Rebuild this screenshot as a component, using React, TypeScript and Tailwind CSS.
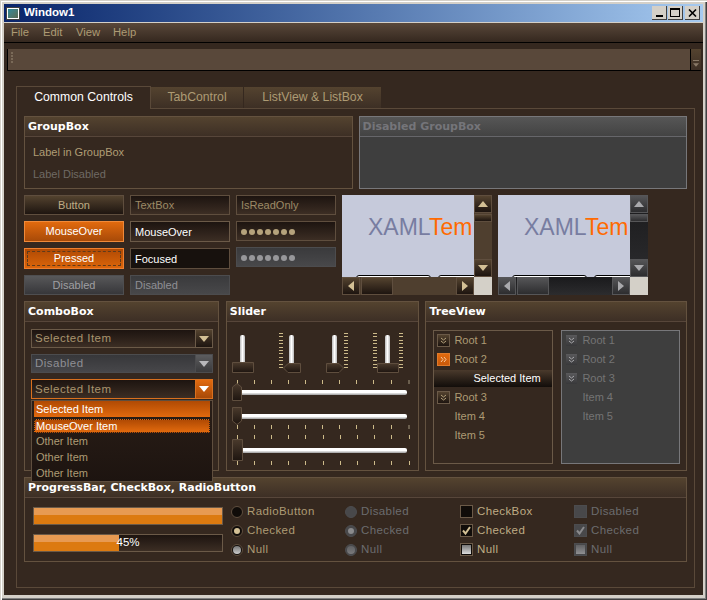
import React from "react";

const Tri = ({ dir, color, size = 5 }: { dir: "u" | "d" | "l" | "r"; color: string; size?: number }) => {
  const pts = { u: "0,8 5,2 10,8", d: "0,2 5,8 10,2", l: "8,0 2,5 8,10", r: "2,0 8,5 2,10" }[dir];
  return (
    <svg width={size * 2} height={size * 2} viewBox="0 0 10 10" className="block">
      <polygon points={pts} fill={color} />
    </svg>
  );
};

const GroupBox = ({ title, className = "", children, disabled = false }: { title: string; className?: string; children?: React.ReactNode; disabled?: boolean }) => (
  <div className={`flex flex-col border ${disabled ? "border-[#77777a] bg-[#3e3e3e]" : "border-[#64523f] bg-[#35281f]"} ${className}`}>
    <div className={`h-[20px] shrink-0 border-b px-[3px] pt-[2px] flex items-center font-['DejaVu_Sans',sans-serif] font-bold text-[11px] ${disabled ? "border-[#66666a] bg-linear-to-b from-[#565656] to-[#434343] text-[#75757a]" : "border-[#57463a] bg-linear-to-b from-[#54432f] to-[#3d2f25] text-white"}`}>
      {title}
    </div>
    {children}
  </div>
);

const Btn = ({ kind, children }: { kind: "n" | "o" | "p" | "d"; children: React.ReactNode }) => {
  const cls = {
    n: "h-[20px] border-[#5f4e3e] bg-linear-to-b from-[#54432f] to-[#1e1510] text-[#bfac85]",
    o: "h-[21px] border-[#f08a3a] bg-linear-to-b from-[#e26a0e] to-[#a84a08] text-white",
    p: "h-[21px] border-[#ee8030] bg-linear-to-b from-[#b04a04] to-[#dc650a] text-white",
    d: "h-[20px] border-[#4e4e50] bg-linear-to-b from-[#58585a] to-[#37373a] text-[#9f9fa2]",
  }[kind];
  return (
    <div className={`relative w-full border flex items-center justify-center text-[11px] ${cls}`}>
      {kind === "p" && <div className="absolute inset-[2px] border border-dashed border-[#5e3a1c]" />}
      <span className="relative">{children}</span>
    </div>
  );
};

const Input = ({ cls, children }: { cls: string; children?: React.ReactNode }) => (
  <div className={`w-full border flex items-center px-[4px] pt-[1px] text-[11px] ${cls}`}>{children}</div>
);

const Dots = ({ color }: { color: string }) => (
  <div className="flex gap-[2px]">
    {[0, 1, 2, 3, 4, 5, 6].map((i) => (
      <span key={i} className="w-[6px] h-[6px] rounded-full" style={{ backgroundColor: color }} />
    ))}
  </div>
);

const SB = ({ dark }: { dark?: boolean }) => {
  const btn = dark
    ? "border-[#565658] bg-linear-to-b from-[#555557] to-[#2d2d2f]"
    : "border-[#5f4e3e] bg-linear-to-b from-[#54432f] to-[#1e1510]";
  const arrow = dark ? "#a9a9ac" : "#d3c095";
  const track = dark ? "bg-linear-to-b from-[#1a1a1c] to-[#2c2c2e]" : "bg-[#4f3f2f]";
  return (
    <div className="w-[150px] h-[100px] flex flex-col">
      <div className="flex h-[82px]">
        <div className="w-[132px] bg-[#c6cadb] overflow-hidden relative">
          <div className="pl-[26px] pt-[17px] text-[23px] leading-[30px] whitespace-nowrap">
            <span className="text-[#787da1]">XAML</span>
            <span className="text-[#ff6a00]">Tem</span>
          </div>
          <div className="absolute left-[14px] top-[80px] w-[75px] h-[6px] bg-white border border-black rounded-t-[3px]" />
          <div className="absolute left-[96px] top-[80px] w-[60px] h-[6px] bg-white border border-black rounded-t-[3px]" />
        </div>
        <div className={`w-[18px] flex flex-col ${track}`}>
          <div className={`h-[18px] border flex items-center justify-center ${btn}`}><Tri dir="u" color={arrow} /></div>
          <div className="h-[1px]" />
          <div className={`h-[8px] border ${btn}`} />
          <div className="flex-1" />
          <div className={`h-[18px] border flex items-center justify-center ${btn}`}><Tri dir="d" color={arrow} /></div>
        </div>
      </div>
      <div className="flex h-[18px]">
        <div className={`w-[132px] flex ${track}`}>
          <div className={`w-[18px] border flex items-center justify-center ${btn}`}><Tri dir="l" color={arrow} /></div>
          <div className="w-[1px]" />
          <div className={`w-[32px] border ${btn}`} />
          <div className="flex-1" />
          <div className={`w-[18px] border flex items-center justify-center ${btn}`}><Tri dir="r" color={arrow} /></div>
        </div>
        <div className="w-[18px] bg-[#d4d0c8]" />
      </div>
    </div>
  );
};

const Combo = ({ kind, children }: { kind: "n" | "d" | "o"; children: React.ReactNode }) => {
  const box = {
    n: "h-[19px] border-[#6b5a48] bg-linear-to-b from-[#1d1410] to-[#3c2e24] text-[#a8946e]",
    d: "h-[19px] border-[#4c4c4e] bg-linear-to-b from-[#37373a] to-[#47474a] text-[#8f8f94]",
    o: "h-[20px] border-[#d9701e] bg-linear-to-b from-[#1d1410] to-[#3c2e24] text-[#a8946e]",
  }[kind];
  const b = {
    n: "bg-linear-to-b from-[#54432f] to-[#1e1510] border-[#6b5a48]",
    d: "bg-linear-to-b from-[#5c5c5e] to-[#3a3a3c] border-[#4c4c4e]",
    o: "bg-linear-to-b from-[#e26a0e] to-[#a84a08] border-[#d9701e]",
  }[kind];
  const a = { n: "#d3c095", d: "#b8b8bb", o: "#ffffff" }[kind];
  return (
    <div className={`relative border flex items-center text-[11.5px] tracking-[0.48px] ${box}`}>
      <span className="flex-1 pl-[3px] pt-[1px]">{children}</span>
      <div className={`w-[17px] h-full border-l flex items-center justify-center ${b}`}><Tri dir="d" color={a} /></div>
    </div>
  );
};

const Ticks = ({ last, v }: { last?: boolean; v?: boolean }) =>
  v ? (
    <div className="flex flex-col justify-between h-[35px] w-[4px]">
      {Array.from({ length: 11 }).map((_, i) => (
        <span key={i} className="h-[1px] w-[4px] bg-[#cdbb8a]" />
      ))}
    </div>
  ) : (
    <div className="flex justify-between h-[4px] ml-[5px] w-[173px]">
      {Array.from({ length: 11 }).map((_, i) => (
        <span key={i} className={i === 10 && last ? "w-[2px] h-[4px] bg-[#6b5f4e]" : "w-[1px] h-[4px] bg-[#cdbb8a]"} />
      ))}
    </div>
  );

const VTrack = () => <div className="w-[5px] h-[28px] rounded-t-[2px] bg-linear-to-r from-[#b9b9b9] via-white to-[#b9b9b9]" />;
const HTrack = () => <div className="h-[5px] flex-1 rounded-r-[2px] bg-linear-to-b from-white via-white to-[#9c9c9c]" />;

const Thumb = ({ w, h, clip, cls = "" }: { w: number; h: number; clip?: string; cls?: string }) => {
  const id = `th${w}x${h}${(clip ?? "").replace(/[^0-9]/g, "")}`;
  return (
    <svg width={w} height={h} viewBox={`0 0 ${w} ${h}`} className={`block shrink-0 ${cls}`}>
      <defs>
        <linearGradient id={id} x1="0" y1="0" x2="0" y2="1">
          <stop offset="0" stopColor="#4a3a2c" />
          <stop offset="1" stopColor="#1e1510" />
        </linearGradient>
      </defs>
      <polygon points={clip ?? `0.5,0.5 ${w - 0.5},0.5 ${w - 0.5},${h - 0.5} 0.5,${h - 0.5}`} fill={`url(#${id})`} stroke="#5f4e3e" />
    </svg>
  );
};

const Exp = ({ kind }: { kind: "n" | "o" | "d" }) => {
  const cls = {
    n: "w-[13px] h-[13px] border border-[#6b5a48] bg-linear-to-b from-[#54432f] to-[#1e1510]",
    o: "w-[13px] h-[13px] border border-[#e07a2a] bg-linear-to-b from-[#e26a0e] to-[#c9590a]",
    d: "w-[11px] h-[11px] bg-linear-to-b from-[#5a5a5c] to-[#38383a]",
  }[kind];
  const stroke = kind === "n" ? "#b5a27c" : kind === "o" ? "#f3c8a0" : "#a9a9ac";
  return (
    <div className={`shrink-0 flex items-center justify-center ${cls}`}>
      <svg width="7" height="7" viewBox="0 0 7 7" fill="none" stroke={stroke} strokeWidth="1">
        {kind === "o" ? <path d="M1 1l2 2.5-2 2.5M4 1l2 2.5-2 2.5" /> : <path d="M1 1l2.5 2 2.5-2M1 4l2.5 2 2.5-2" />}
      </svg>
    </div>
  );
};

const TreeRow = ({ k, children, d }: { k?: "n" | "o" | "d"; children: React.ReactNode; d?: boolean }) => (
  <div className={`h-[19px] flex items-center text-[11px] ${d ? "text-[#747474] pl-[4px] gap-[5px]" : "text-[#ad9b74] pl-[3px] gap-[4px]"}`}>
    {k ? <Exp kind={k} /> : <div className={d ? "w-[11px]" : "w-[13px]"} />}
    <span>{children}</span>
  </div>
);

const Radio = ({ state, d, children }: { state: "o" | "c" | "n"; d?: boolean; children: React.ReactNode }) => (
  <div className={`flex items-center gap-[4px] h-[19px] text-[11.5px] tracking-[0.4px] ${d ? "text-[#6c6c6e]" : "text-[#ad9b74]"}`}>
    <div className={`w-[12px] h-[12px] rounded-full flex items-center justify-center border ${d ? "border-[#4c4c4e] bg-[#48484a]" : "border-[#5f4e3e] bg-[#100c09]"}`}>
      {state === "c" && <div className={`w-[6px] h-[6px] rounded-full ${d ? "bg-[#8a8a8c]" : "bg-[#d3c095]"}`} />}
      {state === "n" && <div className={`w-[8px] h-[8px] rounded-full bg-linear-to-b ${d ? "from-[#606062] to-[#7a7a7c]" : "from-[#777] to-[#ccc]"}`} />}
    </div>
    <span>{children}</span>
  </div>
);

const Check = ({ state, d, children }: { state: "o" | "c" | "n"; d?: boolean; children: React.ReactNode }) => (
  <div className={`flex items-center gap-[4px] h-[19px] text-[11.5px] tracking-[0.4px] ${d ? "text-[#6c6c6e]" : "text-[#bfac85]"}`}>
    <div className={`w-[13px] h-[13px] flex items-center justify-center border ${d ? "border-[#4c4c4e] bg-[#48484a]" : "border-[#6b5a48] bg-[#100c09]"}`}>
      {state === "c" && (
        <svg width="9" height="9" viewBox="0 0 9 9" fill="none" stroke={d ? "#8a8a8c" : "#d3c095"} strokeWidth="2">
          <path d="M1 4.5l2.5 3L8 1" />
        </svg>
      )}
      {state === "n" && <div className={`w-[9px] h-[9px] bg-linear-to-b ${d ? "from-[#606062] to-[#909092]" : "from-[#777] to-[#ddd]"}`} />}
    </div>
    <span>{children}</span>
  </div>
);

const Progress = ({ pct, label }: { pct: number; label?: string }) => (
  <div className="relative h-[18px] w-[190px] border border-[#6b5a48] bg-linear-to-b from-[#1d1410] to-[#3c2e24]">
    <div className="h-full flex flex-col" style={{ width: `${pct}%` }}>
      <div className="h-[7px] bg-[#e79a52]" />
      <div className="flex-1 bg-[#dc7a10]" />
    </div>
    {label && <div className="absolute inset-0 flex items-center justify-center text-white text-[11.5px]">{label}</div>}
  </div>
);

export default function App() {
  return (
    <div className="w-[707px] h-[600px] bg-[#d4d0c8] p-[4px] pb-[5px] shadow-[inset_0_1px_0_#d4d0c8,inset_1px_0_0_#d4d0c8,inset_0_2px_0_#ffffff,inset_2px_0_0_#ffffff,inset_-1px_-1px_0_#404040,inset_-2px_-2px_0_#808080] font-['Liberation_Sans',sans-serif] overflow-hidden">
      <div className="h-full flex flex-col bg-[#35281f]">
        {/* Title */}
        <div className="h-[18px] shrink-0 bg-linear-to-r from-[#0a246a] to-[#a6caf0] flex items-center pl-[2px] pr-[3px]">
          <div className="w-[14px] h-[13px] bg-white border border-[#404040] p-[1px] mr-[4px]">
            <div className="w-full h-full bg-linear-to-br from-[#2a8a9a] to-[#5a6a50]" />
          </div>
          <span className="text-white font-bold text-[11.5px]">Window1</span>
          <div className="flex-1" />
          <div className="flex">
            <div className="w-[15px] h-[14px] bg-[#d4d0c8] border-r border-b border-[#404040] flex items-end justify-center pb-[2px]"><span className="w-[7px] h-[2px] bg-black" /></div>
            <div className="w-[15px] h-[14px] ml-[1px] bg-[#d4d0c8] border-r border-b border-[#404040] flex items-center justify-center"><span className="w-[10px] h-[9px] border border-black border-t-2" /></div>
            <div className="w-[15px] h-[14px] ml-[2px] bg-[#d4d0c8] border-r border-b border-[#404040] flex items-center justify-center">
              <svg width="9" height="8" viewBox="0 0 9 8" stroke="black" strokeWidth="1.6"><path d="M1 0.5l7 7M8 0.5l-7 7" /></svg>
            </div>
          </div>
        </div>
        <div className="h-[1px] shrink-0 bg-[#d4d0c8]" />
        {/* Menu */}
        <div className="h-[19px] shrink-0 bg-linear-to-b from-[#59483a] to-[#35281f] flex items-center pl-[7px] text-[11.25px] text-[#ad9b74]">
          <span className="w-[32px]">File</span>
          <span className="w-[33px]">Edit</span>
          <span className="w-[37px]">View</span>
          <span>Help</span>
        </div>
        <div className="h-[1px] shrink-0 bg-black" />
        {/* Toolbar */}
        <div className="pt-[6px] pl-[3px] pr-[2px] shrink-0">
          <div className="h-[22px] flex bg-[#59483a] border-l border-b border-black">
            <div className="w-[6px] flex flex-col gap-[1px] pl-[3px] pt-[3px]">
              {[0, 1, 2, 3].map((i) => <span key={i} className="w-[2px] h-[2px] bg-[#7a6a58]" />)}
            </div>
            <div className="flex-1" />
            <div className="w-[11px] border-l border-black bg-linear-to-b from-[#54432f] to-[#3d2f25] flex flex-col items-center justify-end pb-[2px] gap-[1px]">
              <span className="w-[6px] h-[1px] bg-[#8a7a68]" />
              <Tri dir="d" color="#8a7a68" size={3} />
            </div>
          </div>
        </div>
        {/* Tabs */}
        <div className="pt-[15px] pl-[12px] pr-[8px] flex flex-col">
          <div className="flex items-end h-[22px] text-[12.25px] text-[#ad9b74]">
            <div className="w-[135px] h-[23px] -mb-[1px] z-10 relative border border-b-0 border-[#5a4939] bg-[#35281f] text-white flex items-center justify-center pb-[2px]">Common Controls</div>
            <div className="w-[93px] h-[21px] border-r border-[#35281f] bg-linear-to-b from-[#54432f] to-[#3d2f25] flex items-center justify-center">TabControl</div>
            <div className="w-[137px] h-[21px] bg-linear-to-b from-[#54432f] to-[#3d2f25] flex items-center justify-center">ListView &amp; ListBox</div>
          </div>
          <div className="h-[480px] border border-[#5a4939] px-[7px] pt-[7px] flex flex-col gap-[6px]">
            {/* Row 1 */}
            <div className="flex gap-[6px] h-[73px] shrink-0">
              <GroupBox title="GroupBox" className="w-[329px]">
                <div className="px-[8px] pt-[9px] text-[11px] leading-[13px] text-[#b09d75]">Label in GroupBox</div>
                <div className="px-[8px] pt-[9px] text-[11px] leading-[13px] text-[#6f6a64]">Label Disabled</div>
              </GroupBox>
              <GroupBox title="Disabled GroupBox" className="w-[329px]" disabled />
            </div>
            {/* Row 2 */}
            <div className="flex gap-[6px] h-[100px] shrink-0">
              <div className="w-[100px] flex flex-col gap-[6px]">
                <Btn kind="n">Button</Btn>
                <Btn kind="o">MouseOver</Btn>
                <Btn kind="p">Pressed</Btn>
                <Btn kind="d">Disabled</Btn>
              </div>
              <div className="w-[100px] flex flex-col gap-[6px]">
                <Input cls="h-[20px] border-[#5f4e3e] bg-linear-to-b from-[#1d1410] to-[#3c2e24] text-[#9c8a66]">TextBox</Input>
                <Input cls="h-[21px] border-[#6b5a48] bg-linear-to-b from-[#1d1410] to-[#3c2e24] text-white">MouseOver</Input>
                <Input cls="h-[21px] border-[#5f4e3e] bg-[#17110d] text-white">Focused</Input>
                <Input cls="h-[20px] border-[#4c4c4e] bg-linear-to-b from-[#3a3a3c] to-[#48484a] text-[#8f8f94]">Disabled</Input>
              </div>
              <div className="w-[100px] flex flex-col gap-[6px]">
                <Input cls="h-[20px] border-[#5f4e3e] bg-linear-to-b from-[#1d1410] to-[#3c2e24] text-[#9c8a66]">IsReadOnly</Input>
                <Input cls="h-[20px] border-[#5f4e3e] bg-linear-to-b from-[#1d1410] to-[#3c2e24]"><Dots color="#b5a27c" /></Input>
                <Input cls="h-[20px] border-[#4c4c4e] bg-linear-to-b from-[#3a3a3c] to-[#48484a]"><Dots color="#97979a" /></Input>
              </div>
              <SB />
              <SB dark />
            </div>
            {/* Row 3 */}
            <div className="flex h-[170px] shrink-0 relative z-20">
              <GroupBox title="ComboBox" className="w-[195px] mr-[7px]">
                <div className="flex flex-col gap-[6px] pl-[6px] pr-[5px] pt-[7px]">
                  <Combo kind="n">Selected Item</Combo>
                  <Combo kind="d">Disabled</Combo>
                  <div className="relative">
                    <Combo kind="o">Selected Item</Combo>
                    <div className="absolute left-0 top-[21px] w-[182px] h-[82px] border border-[#5f4e3e] bg-linear-to-b from-[#2a1e17] to-[#1d1410] px-[2px] text-[11px] text-[#ad9b74]">
                      <div className="h-[16px] px-[2px] flex items-center text-white bg-linear-to-b from-[#b04a04] to-[#e26a0e]">Selected Item</div>
                      <div className="h-[14px] mt-[2px] px-[1px] flex items-center text-white bg-linear-to-b from-[#b04a04] to-[#e26a0e] border border-dotted border-[#2a1e17]">MouseOver Item</div>
                      <div className="h-[16px] px-[2px] flex items-center">Other Item</div>
                      <div className="h-[16px] px-[2px] flex items-center">Other Item</div>
                      <div className="h-[16px] px-[2px] flex items-center">Other Item</div>
                    </div>
                  </div>
                </div>
              </GroupBox>
              <GroupBox title="Slider" className="w-[194px] mr-[6px]">
                <div className="pl-[5px] pt-[11px]">
                  <div className="flex h-[42px]">
                    <div className="w-[22px] flex flex-col items-center pt-[2px]">
                      <VTrack />
                      <Thumb w={22} h={11} cls="-mt-[1px]" />
                    </div>
                    <div className="ml-[25px] flex items-start">
                      <Ticks v />
                      <div className="w-[18px] flex flex-col items-center pt-[2px] relative">
                        <VTrack />
                        <Thumb w={18} h={10} clip="0.5,5 5,0.5 17.5,0.5 17.5,9.5 5,9.5" />
                      </div>
                    </div>
                    <div className="ml-[25px] flex items-start">
                      <div className="w-[18px] flex flex-col items-center pt-[2px]">
                        <VTrack />
                        <Thumb w={18} h={10} clip="0.5,0.5 13,0.5 17.5,5 13,9.5 0.5,9.5" />
                      </div>
                      <Ticks v />
                    </div>
                    <div className="ml-[25px] flex items-start">
                      <Ticks v />
                      <div className="w-[22px] flex flex-col items-center pt-[2px]">
                        <VTrack />
                        <Thumb w={22} h={10} />
                      </div>
                      <Ticks v />
                    </div>
                  </div>
                  <div className="mt-[5px]"><Ticks last /></div>
                  <div className="flex items-center h-[18px] -mt-[1px]">
                    <Thumb w={10} h={18} clip="5,0.5 9.5,4 9.5,17.5 0.5,17.5 0.5,4" />
                    <HTrack />
                    <div className="w-[11px]" />
                  </div>
                  <div className="flex items-center h-[18px] mt-[6px]">
                    <Thumb w={10} h={18} clip="0.5,0.5 9.5,0.5 9.5,14 5,17.5 0.5,14" />
                    <HTrack />
                    <div className="w-[11px]" />
                  </div>
                  <Ticks last />
                  <div className="mt-[6px]"><Ticks /></div>
                  <div className="flex items-center h-[22px]">
                    <Thumb w={11} h={22} />
                    <HTrack />
                    <div className="w-[11px]" />
                  </div>
                  <Ticks />
                </div>
              </GroupBox>
              <GroupBox title="TreeView" className="w-[262px]">
                <div className="flex gap-[8px] pl-[7px] pt-[8px]">
                  <div className="w-[120px] h-[134px] border border-[#6b5a48]">
                    <TreeRow k="n">Root 1</TreeRow>
                    <TreeRow k="o">Root 2</TreeRow>
                    <div className="h-[17px] my-[1px] pl-[39px] flex items-center text-white text-[11px] bg-linear-to-b from-[#4a3a2c] to-[#120d0a]">Selected Item</div>
                    <TreeRow k="n">Root 3</TreeRow>
                    <TreeRow>Item 4</TreeRow>
                    <TreeRow>Item 5</TreeRow>
                  </div>
                  <div className="w-[119px] h-[134px] border border-[#77777a] bg-[#3e3e3e]">
                    <TreeRow k="d" d>Root 1</TreeRow>
                    <TreeRow k="d" d>Root 2</TreeRow>
                    <TreeRow k="d" d>Root 3</TreeRow>
                    <TreeRow d>Item 4</TreeRow>
                    <TreeRow d>Item 5</TreeRow>
                  </div>
                </div>
              </GroupBox>
            </div>
            {/* Row 4 */}
            <GroupBox title="ProgressBar, CheckBox, RadioButton" className="h-[85px] shrink-0">
              <div className="flex pl-[8px] pt-[4px]">
                <div className="w-[198px] pt-[5px] flex flex-col gap-[9px]">
                  <Progress pct={100} />
                  <Progress pct={45} label="45%" />
                </div>
                <div className="w-[114px] flex flex-col"><Radio state="o">RadioButton</Radio><Radio state="c">Checked</Radio><Radio state="n">Null</Radio></div>
                <div className="w-[115px] flex flex-col"><Radio state="o" d>Disabled</Radio><Radio state="c" d>Checked</Radio><Radio state="n" d>Null</Radio></div>
                <div className="w-[114px] flex flex-col"><Check state="o">CheckBox</Check><Check state="c">Checked</Check><Check state="n">Null</Check></div>
                <div className="flex flex-col"><Check state="o" d>Disabled</Check><Check state="c" d>Checked</Check><Check state="n" d>Null</Check></div>
              </div>
            </GroupBox>
          </div>
        </div>
      </div>
    </div>
  );
}
